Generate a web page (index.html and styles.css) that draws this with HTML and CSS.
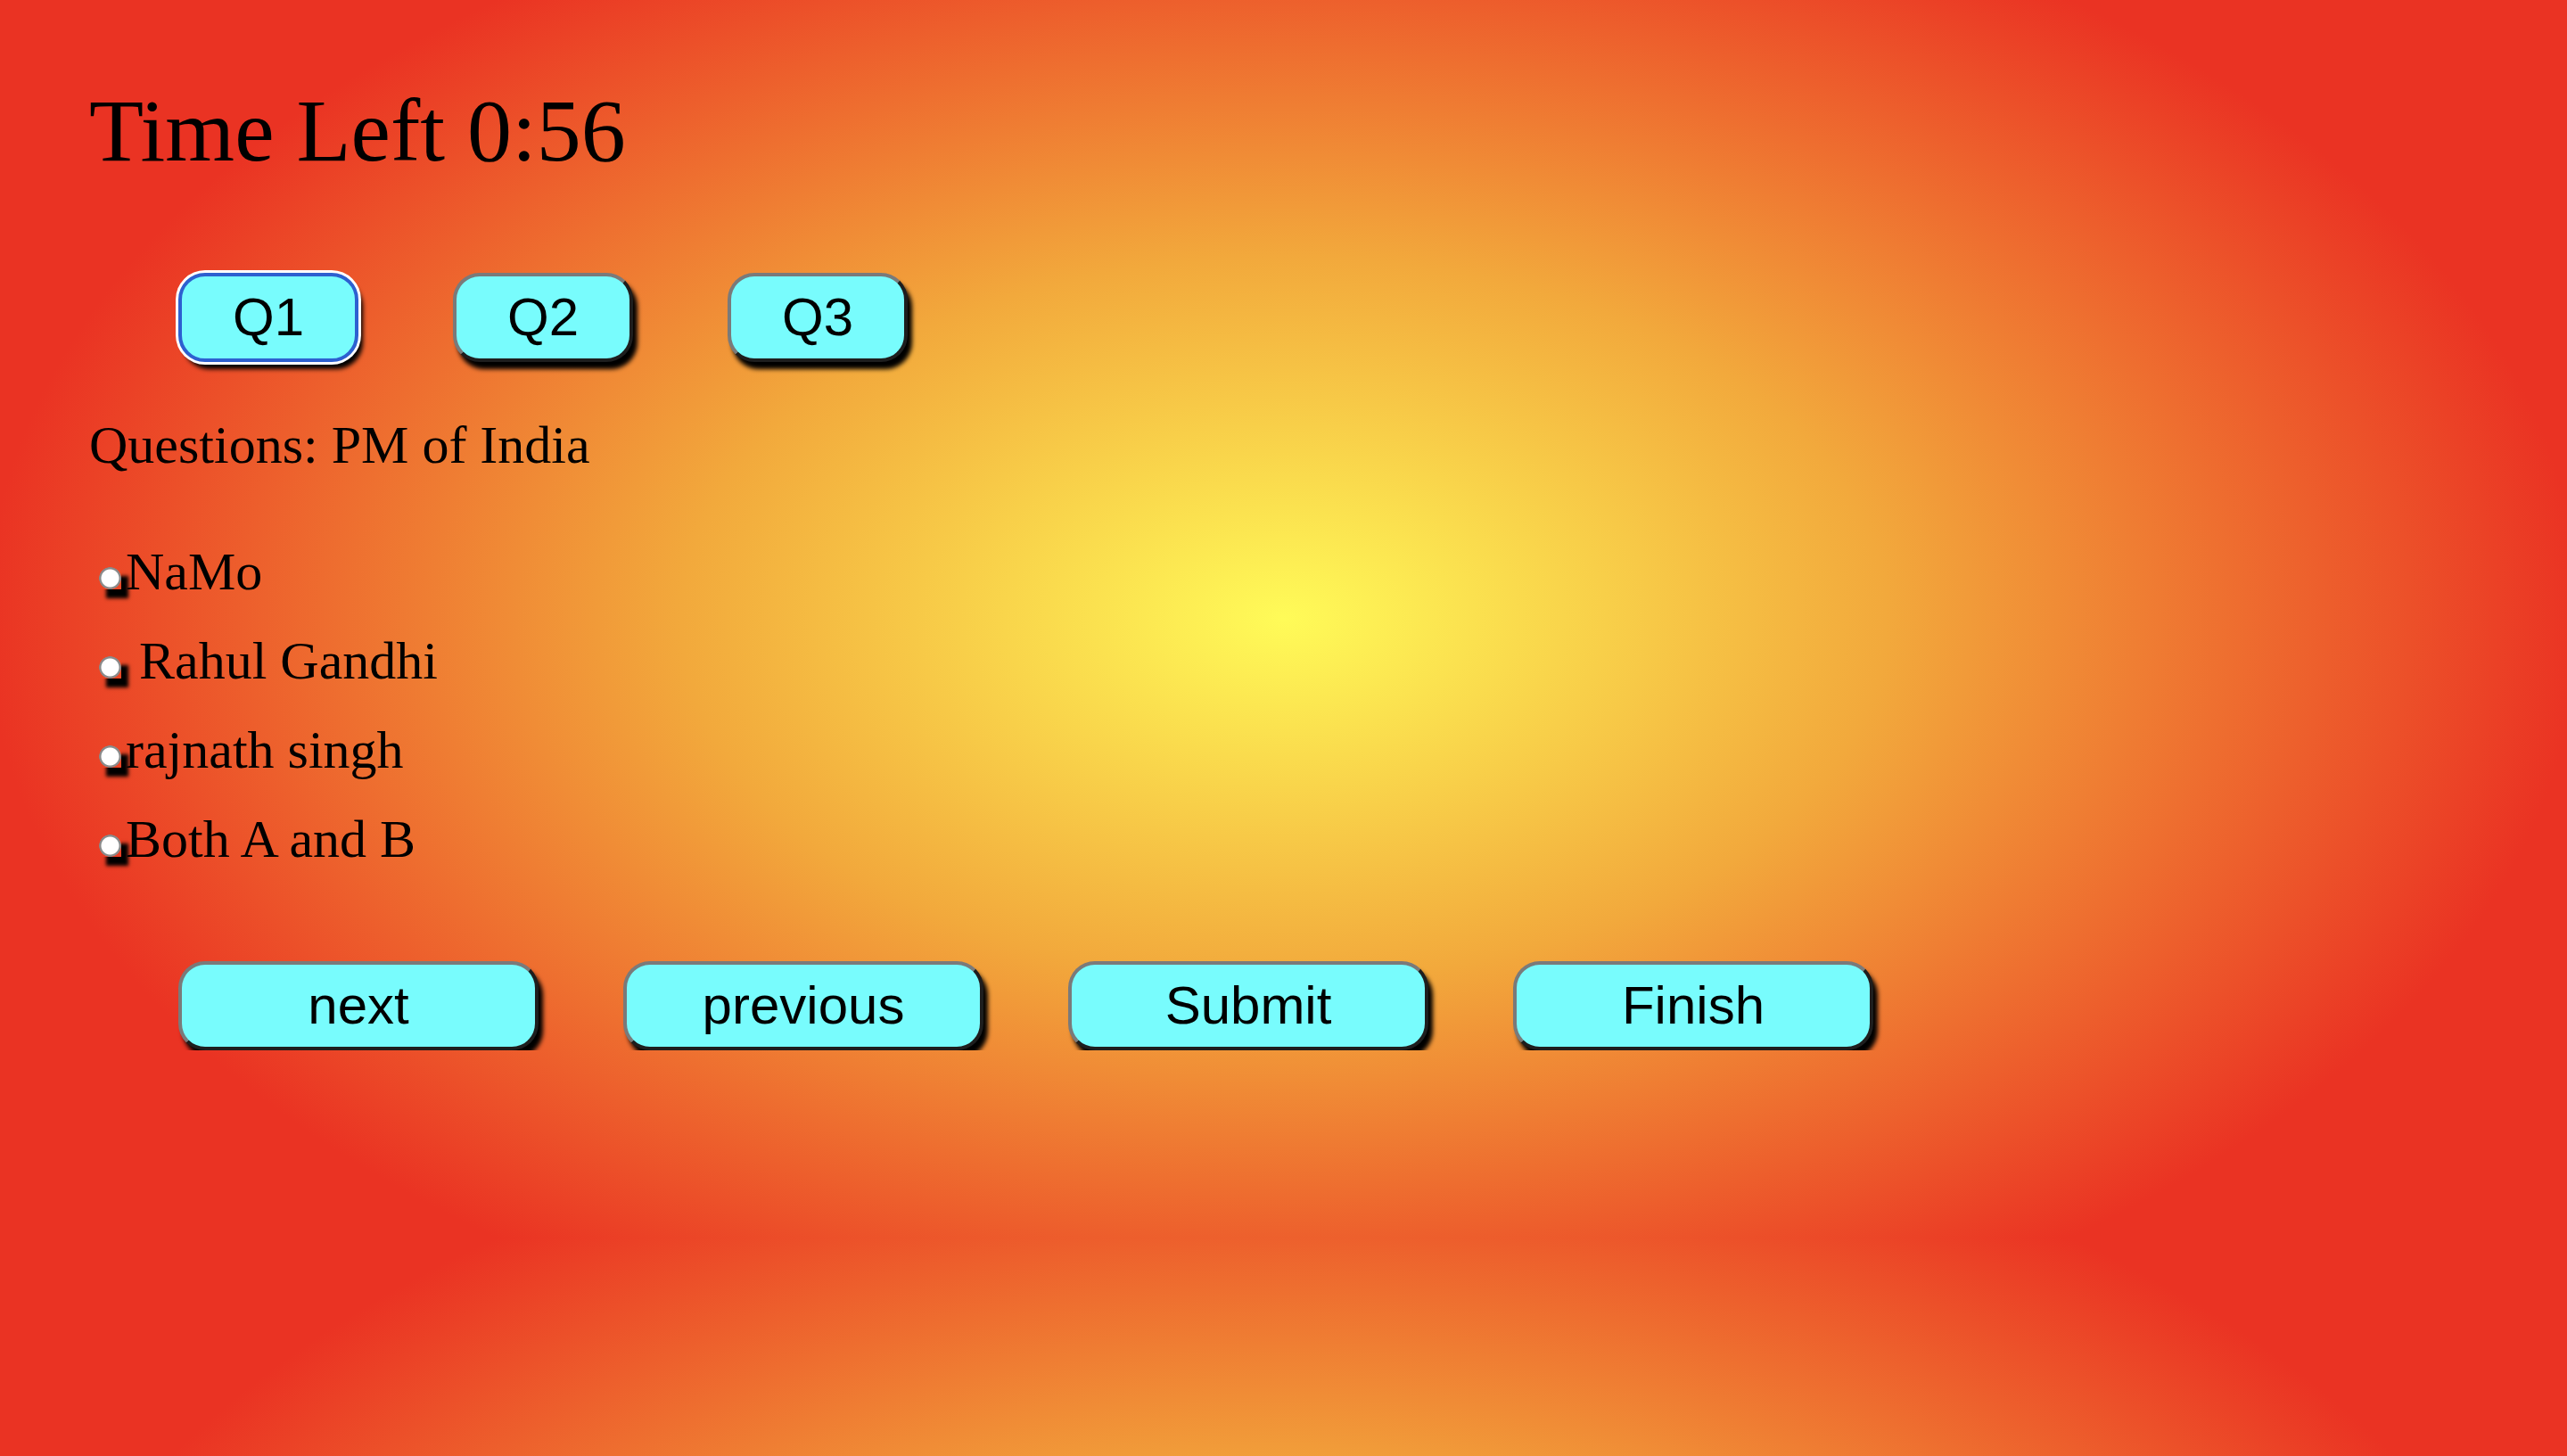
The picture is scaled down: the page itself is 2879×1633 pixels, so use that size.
FILE: index.html
```html
<!DOCTYPE html>
<html lang="en">
<head>
<meta charset="utf-8">
<title>Quiz</title>
<link rel="stylesheet" href="styles.css">
</head>
<body>
<main class="page">
  <h1 class="timer">Time Left 0:56</h1>
  <nav class="qnav">
    <button class="btn qbtn is-focused">Q1</button>
    <button class="btn qbtn">Q2</button>
    <button class="btn qbtn">Q3</button>
  </nav>
  <p class="question">Questions: PM of India</p>
  <div class="options">
    <label class="option"><input class="radio" type="radio" name="ans">NaMo</label>
    <label class="option"><input class="radio" type="radio" name="ans"> Rahul Gandhi</label>
    <label class="option"><input class="radio" type="radio" name="ans">rajnath singh</label>
    <label class="option"><input class="radio" type="radio" name="ans">Both A and B</label>
  </div>
  <div class="actions">
    <button class="btn wide">next</button>
    <button class="btn wide">previous</button>
    <button class="btn wide">Submit</button>
    <button class="btn wide">Finish</button>
  </div>
</main>
</body>
</html>
```

FILE: styles.css
```css
html {
  background: radial-gradient(ellipse 1500px 900px at 50% 50%, #fffb58 0%, #f2a93c 45%, #ea3323 97%);
  background-size: 100% 1388px;
  min-height: 100%;
}

body {
  margin: 0;
  font-family: "Liberation Serif", "Times New Roman", serif;
  color: #000;
}

.page {
  padding-left: 100px;
}

.timer {
  margin: 97px 0 0;
  font-size: 100px;
  line-height: 100px;
  font-weight: normal;
}

.qnav {
  display: flex;
  gap: 106px;
  margin-top: 109px;
  padding-left: 100px;
}

.btn {
  box-sizing: border-box;
  height: 100px;
  padding: 0;
  border: 4px solid;
  border-color: #7a7a7a #1e1e1e #1e1e1e #7a7a7a;
  border-radius: 30px;
  background: #78fcfd;
  color: #000;
  font-family: "Liberation Sans", Arial, sans-serif;
  font-size: 60px;
  line-height: 1;
  box-shadow: 5px 8px 5px #000;
}

.qbtn {
  width: 202px;
}

.is-focused {
  border-color: #2d60d0;
  box-shadow: 0 0 0 3px #fff, 5px 8px 5px #000;
}

.question {
  margin: 63px 0 0;
  font-size: 60px;
  line-height: 60px;
}

.options {
  display: flex;
  flex-direction: column;
  margin-top: 62px;
}

.option {
  display: block;
  font-size: 60px;
  line-height: 100px;
  white-space: pre;
}

.radio {
  -webkit-appearance: none;
  appearance: none;
  display: inline-block;
  width: 25px;
  height: 25px;
  margin: 0 5px 0 11px;
  padding: 0;
  border: none;
  background: radial-gradient(circle at 50% 50%, #fff 0, #fff 9.5px, #8a8a8a 10.5px, #8a8a8a 12px, transparent 12.6px);
  box-shadow: 8px 10px 4px #000;
  vertical-align: baseline;
}

.actions {
  display: flex;
  gap: 95px;
  margin-top: 87px;
  padding-left: 100px;
}

.wide {
  width: 404px;
}
```
